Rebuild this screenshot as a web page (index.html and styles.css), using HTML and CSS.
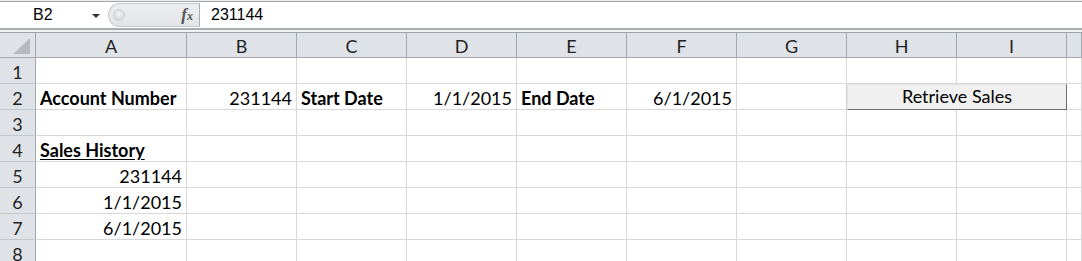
FILE: index.html
```html
<!DOCTYPE html>
<html lang="en">
<head>
    <meta charset="UTF-8">
    <meta name="viewport" content="width=device-width, initial-scale=1.0">
    <title>Sales History</title>
    <link rel="stylesheet" href="styles.css">
</head>
<body>

<div class="top-edge"></div>

<div class="formula-bar">
    <div class="name-box">
        <span class="name-text">B2</span>
        <span class="name-arrow"></span>
    </div>
    <div class="fx-box">
        <span class="grip"></span>
        <span class="fx">f<span class="fx-x">x</span></span>
    </div>
    <div class="formula-input">231144</div>
</div>

<div class="bar-gap"></div>

<div class="sheet">
    <!-- en-tetes de colonnes -->
    <div class="corner">
        <svg width="18" height="16" viewBox="0 0 18 16"><polygon points="17,0 17,16 0,16" fill="#b6babf"/></svg>
    </div>
    <div class="col-head">A</div>
    <div class="col-head">B</div>
    <div class="col-head">C</div>
    <div class="col-head">D</div>
    <div class="col-head">E</div>
    <div class="col-head">F</div>
    <div class="col-head">G</div>
    <div class="col-head">H</div>
    <div class="col-head">I</div>
    <div class="col-head"></div>

    <!-- ligne 1 -->
    <div class="row-head">1</div>
    <div class="cell"></div><div class="cell"></div><div class="cell"></div><div class="cell"></div><div class="cell"></div>
    <div class="cell"></div><div class="cell"></div><div class="cell"></div><div class="cell"></div><div class="cell"></div>

    <!-- ligne 2 -->
    <div class="row-head">2</div>
    <div class="cell bold">Account Number</div>
    <div class="cell num">231144</div>
    <div class="cell bold">Start Date</div>
    <div class="cell num">1/1/2015</div>
    <div class="cell bold">End Date</div>
    <div class="cell num">6/1/2015</div>
    <div class="cell"></div>
    <div class="button-cell"><button class="retrieve-btn">Retrieve Sales</button></div>
    <div class="cell"></div>

    <!-- ligne 3 -->
    <div class="row-head">3</div>
    <div class="cell"></div><div class="cell"></div><div class="cell"></div><div class="cell"></div><div class="cell"></div>
    <div class="cell"></div><div class="cell"></div><div class="cell"></div><div class="cell"></div><div class="cell"></div>

    <!-- ligne 4 -->
    <div class="row-head">4</div>
    <div class="cell bold"><span class="ul">Sales History</span></div>
    <div class="cell"></div><div class="cell"></div><div class="cell"></div><div class="cell"></div>
    <div class="cell"></div><div class="cell"></div><div class="cell"></div><div class="cell"></div><div class="cell"></div>

    <!-- ligne 5 -->
    <div class="row-head">5</div>
    <div class="cell num">231144</div>
    <div class="cell"></div><div class="cell"></div><div class="cell"></div><div class="cell"></div>
    <div class="cell"></div><div class="cell"></div><div class="cell"></div><div class="cell"></div><div class="cell"></div>

    <!-- ligne 6 -->
    <div class="row-head">6</div>
    <div class="cell num">1/1/2015</div>
    <div class="cell"></div><div class="cell"></div><div class="cell"></div><div class="cell"></div>
    <div class="cell"></div><div class="cell"></div><div class="cell"></div><div class="cell"></div><div class="cell"></div>

    <!-- ligne 7 -->
    <div class="row-head">7</div>
    <div class="cell num">6/1/2015</div>
    <div class="cell"></div><div class="cell"></div><div class="cell"></div><div class="cell"></div>
    <div class="cell"></div><div class="cell"></div><div class="cell"></div><div class="cell"></div><div class="cell"></div>

    <!-- ligne 8 -->
    <div class="row-head">8</div>
    <div class="cell"></div><div class="cell"></div><div class="cell"></div><div class="cell"></div><div class="cell"></div>
    <div class="cell"></div><div class="cell"></div><div class="cell"></div><div class="cell"></div><div class="cell"></div>
</div>

</body>
</html>
```

FILE: styles.css
```css
body {
    margin: 0;
    padding: 0;
    height: 261px;
    overflow: hidden;
    background-color: #ffffff;
    font-family: 'Lato', 'Liberation Sans', sans-serif;
}
.top-edge {
    height: 1px;
    background-color: #e9ebee;
    border-bottom: 1px solid #a3a7ad;
}
.formula-bar {
    display: flex;
    height: 26px;
    border-bottom: 2px solid #a9adb3;
    font-family: 'Liberation Sans', Arial, sans-serif;
    font-size: 16px;
}
.name-box {
    display: flex;
    align-items: center;
    width: 108px;
    box-sizing: border-box;
}
.name-text {
    padding-left: 33px;
    width: 59px;
}
.name-arrow {
    width: 0;
    height: 0;
    border-left: 4px solid transparent;
    border-right: 4px solid transparent;
    border-top: 4px solid #333;
    margin-top: 2px;
}
.fx-box {
    display: flex;
    align-items: center;
    justify-content: space-between;
    width: 92px;
    height: 24px;
    margin-top: 1px;
    box-sizing: border-box;
    background: linear-gradient(#eceef0, #e2e4e7);
    border: 1px solid #c3c6ca;
    border-right: 1px solid #a9adb3;
    border-radius: 13px 0 0 13px;
    padding: 0 6px 0 4px;
}
.grip {
    width: 10px;
    height: 10px;
    border-radius: 50%;
    background: radial-gradient(circle at 50% 40%, #f4f4f4, #c9cbcf);
    border: 1px solid #d0d2d5;
}
.fx {
    font-family: 'Liberation Serif', serif;
    font-style: italic;
    font-weight: bold;
    font-size: 17px;
    color: #555;
}
.fx-x {
    font-size: 12px;
}
.formula-input {
    display: flex;
    align-items: center;
    padding-left: 11px;
    color: #000;
}
.bar-gap {
    height: 2px;
    background-color: #eef0f2;
    border-bottom: 1px solid #9fa4aa;
}
.sheet {
    display: grid;
    grid-template-columns: 36px 151px repeat(8, 110px) 1fr;
    grid-template-rows: 25px repeat(8, 26px);
    font-size: 18px;
    color: #000;
}
.corner {
    display: flex;
    align-items: flex-end;
    justify-content: flex-end;
    padding: 0 4px 3px 0;
    background-color: #dfe3e8;
    border-right: 1px solid #a4a9af;
    border-bottom: 1px solid #a4a9af;
}
.col-head {
    display: flex;
    align-items: center;
    justify-content: center;
    padding-top: 2px;
    box-sizing: border-box;
    background-color: #dfe3e8;
    border-right: 1px solid #a4a9af;
    border-bottom: 1px solid #a4a9af;
    color: #1f1f1f;
}
.row-head {
    display: flex;
    align-items: flex-end;
    justify-content: center;
    padding-bottom: 1px;
    box-sizing: border-box;
    background-color: #dfe3e8;
    border-right: 1px solid #a4a9af;
    border-bottom: 1px solid #c4c8cd;
    color: #1f1f1f;
    line-height: 20px;
}
.cell {
    display: flex;
    align-items: flex-end;
    padding: 0 4px 1px 4px;
    box-sizing: border-box;
    border-right: 1px solid #d8d8d8;
    border-bottom: 1px solid #d8d8d8;
    line-height: 20px;
    white-space: nowrap;
    overflow: hidden;
}
.num {
    justify-content: flex-end;
}
.bold {
    font-weight: bold;
}
.ul {
    text-decoration: underline;
    text-underline-offset: 2px;
}
.button-cell {
    grid-column: span 2;
    display: flex;
}
.retrieve-btn {
    width: 100%;
    height: 100%;
    margin: 0;
    padding: 0 0 2px 0;
    background-color: #f0f0f0;
    border: none;
    border-top: 1px solid #e2e2e2;
    border-left: 1px solid #e2e2e2;
    border-right: 1px solid #6b6b6b;
    border-bottom: 1px solid #6b6b6b;
    font-family: 'Lato', 'Liberation Sans', sans-serif;
    font-size: 18px;
    color: #000;
}
```
